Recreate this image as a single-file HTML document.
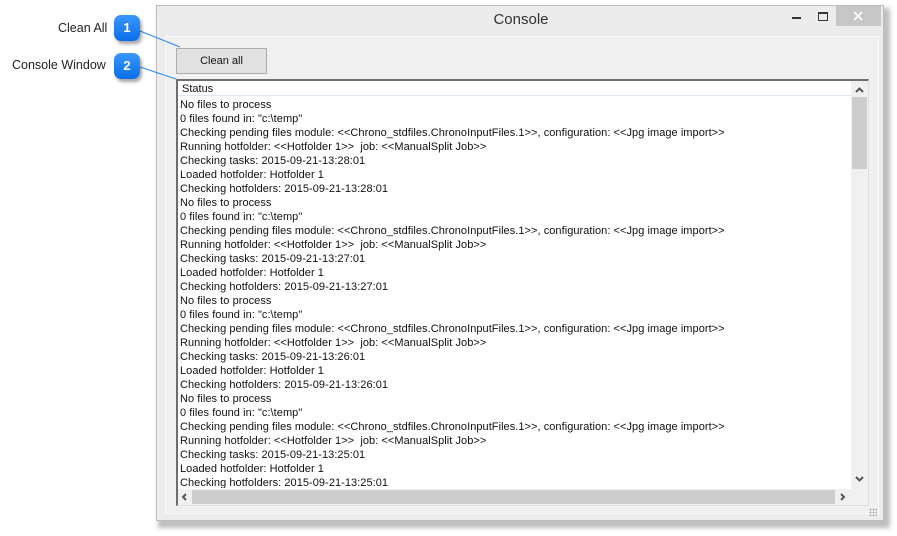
<!DOCTYPE html>
<html><head><style>
body{margin:0;width:897px;height:536px;background:#fff;position:relative;overflow:hidden;font-family:"Liberation Sans",sans-serif}
.a{position:absolute}
.lbl{font-size:12.5px;color:#222}
.bub{width:26px;height:26px;border-radius:7px;background:linear-gradient(#3b97ff,#0a6ee8);color:#fff;font-weight:bold;font-size:13px;text-align:center;line-height:26px;box-shadow:2px 3px 3px rgba(0,0,0,.35)}
.row{font-size:11px;line-height:14px;color:#111;white-space:pre;height:14px;letter-spacing:0.05px}
</style></head><body>
<div class="a" style="left:158px;top:8px;width:732px;height:520px;background:rgba(0,0,0,.25);filter:blur(2px)"></div>
<div class="a" style="left:156px;top:5px;width:728px;height:516px;background:#ececec;border:1px solid #bdbdbd;box-sizing:border-box"></div>
<div class="a" style="left:471px;top:11px;width:100px;text-align:center;font-size:15px;color:#333">Console</div>
<div class="a" style="left:792px;top:17px;width:9px;height:2px;background:#333"></div>
<div class="a" style="left:818px;top:12px;width:8px;height:6px;border:1px solid #333;border-top-width:2px"></div>
<div class="a" style="left:836px;top:6px;width:45px;height:20px;background:#c7c7c7"></div>
<svg class="a" style="left:836px;top:6px" width="45" height="20"><path d="M18 6l8 8M26 6l-8 8" stroke="#fff" stroke-width="1.6"/></svg>
<div class="a" style="left:165px;top:36px;width:714px;height:478px;background:#f0f0f0;border:1px solid #fafafa;box-sizing:border-box"></div>
<div class="a" style="left:176px;top:48px;width:91px;height:26px;background:#e1e1e1;border:1px solid #adadad;box-sizing:border-box;font-size:11px;text-align:center;line-height:24px;color:#111">Clean all</div>
<div class="a" style="left:176px;top:79px;width:693px;height:427px;background:#fff;border-top:2px solid #6e6e6e;border-left:2px solid #6e6e6e;border-right:1px solid #e0e0e0;border-bottom:1px solid #e0e0e0;box-sizing:border-box"></div>
<div class="a" style="left:178px;top:81px;width:673px;height:15px;border-bottom:1px solid #dce6f4;font-size:11px;line-height:16px;padding-left:4px;box-sizing:border-box;color:#111">Status</div>
<div class="a" style="left:851px;top:81px;width:17px;height:408px;background:#f0f0f0"></div>
<div class="a" style="left:852px;top:97px;width:15px;height:72px;background:#cdcdcd"></div>
<div class="a" style="left:178px;top:489px;width:690px;height:16px;background:#f0f0f0"></div>
<div class="a" style="left:192px;top:490px;width:643px;height:14px;background:#cdcdcd"></div>
<svg class="a" style="left:0;top:0" width="897" height="536" fill="none" stroke="#555" stroke-width="2">
<path d="M856 92l3.5-3.5 3.5 3.5"/>
<path d="M856 477l3.5 3.5 3.5-3.5"/>
<path d="M186 494l-3 3 3 3"/>
<path d="M841 494l3 3-3 3"/>
<line x1="140" y1="31" x2="180" y2="47" stroke="#2a8bf2" stroke-width="1"/><line x1="140" y1="67" x2="176" y2="79" stroke="#2a8bf2" stroke-width="1"/></svg>
<div class="a" style="left:869px;top:508px;width:8px;height:8px;background:radial-gradient(circle,#aaa 0.8px,transparent 1px) 0 0/3px 3px"></div>
<div class="a lbl" style="left:58px;top:21px">Clean All</div>
<div class="a lbl" style="left:12px;top:58px">Console Window</div>
<div class="a bub" style="left:114px;top:15px">1</div>
<div class="a bub" style="left:114px;top:53px">2</div>
<div class="a" style="left:180px;top:97px;width:670px;height:391px;overflow:hidden;padding-top:1px;box-sizing:border-box">
<div class="row">No files to process</div>
<div class="row">0 files found in: "c:\temp"</div>
<div class="row">Checking pending files module: &lt;&lt;Chrono_stdfiles.ChronoInputFiles.1&gt;&gt;, configuration: &lt;&lt;Jpg image import&gt;&gt;</div>
<div class="row">Running hotfolder: &lt;&lt;Hotfolder 1&gt;&gt;  job: &lt;&lt;ManualSplit Job&gt;&gt;</div>
<div class="row">Checking tasks: 2015-09-21-13:28:01</div>
<div class="row">Loaded hotfolder: Hotfolder 1</div>
<div class="row">Checking hotfolders: 2015-09-21-13:28:01</div>
<div class="row">No files to process</div>
<div class="row">0 files found in: "c:\temp"</div>
<div class="row">Checking pending files module: &lt;&lt;Chrono_stdfiles.ChronoInputFiles.1&gt;&gt;, configuration: &lt;&lt;Jpg image import&gt;&gt;</div>
<div class="row">Running hotfolder: &lt;&lt;Hotfolder 1&gt;&gt;  job: &lt;&lt;ManualSplit Job&gt;&gt;</div>
<div class="row">Checking tasks: 2015-09-21-13:27:01</div>
<div class="row">Loaded hotfolder: Hotfolder 1</div>
<div class="row">Checking hotfolders: 2015-09-21-13:27:01</div>
<div class="row">No files to process</div>
<div class="row">0 files found in: "c:\temp"</div>
<div class="row">Checking pending files module: &lt;&lt;Chrono_stdfiles.ChronoInputFiles.1&gt;&gt;, configuration: &lt;&lt;Jpg image import&gt;&gt;</div>
<div class="row">Running hotfolder: &lt;&lt;Hotfolder 1&gt;&gt;  job: &lt;&lt;ManualSplit Job&gt;&gt;</div>
<div class="row">Checking tasks: 2015-09-21-13:26:01</div>
<div class="row">Loaded hotfolder: Hotfolder 1</div>
<div class="row">Checking hotfolders: 2015-09-21-13:26:01</div>
<div class="row">No files to process</div>
<div class="row">0 files found in: "c:\temp"</div>
<div class="row">Checking pending files module: &lt;&lt;Chrono_stdfiles.ChronoInputFiles.1&gt;&gt;, configuration: &lt;&lt;Jpg image import&gt;&gt;</div>
<div class="row">Running hotfolder: &lt;&lt;Hotfolder 1&gt;&gt;  job: &lt;&lt;ManualSplit Job&gt;&gt;</div>
<div class="row">Checking tasks: 2015-09-21-13:25:01</div>
<div class="row">Loaded hotfolder: Hotfolder 1</div>
<div class="row">Checking hotfolders: 2015-09-21-13:25:01</div>
</div>
</body></html>
